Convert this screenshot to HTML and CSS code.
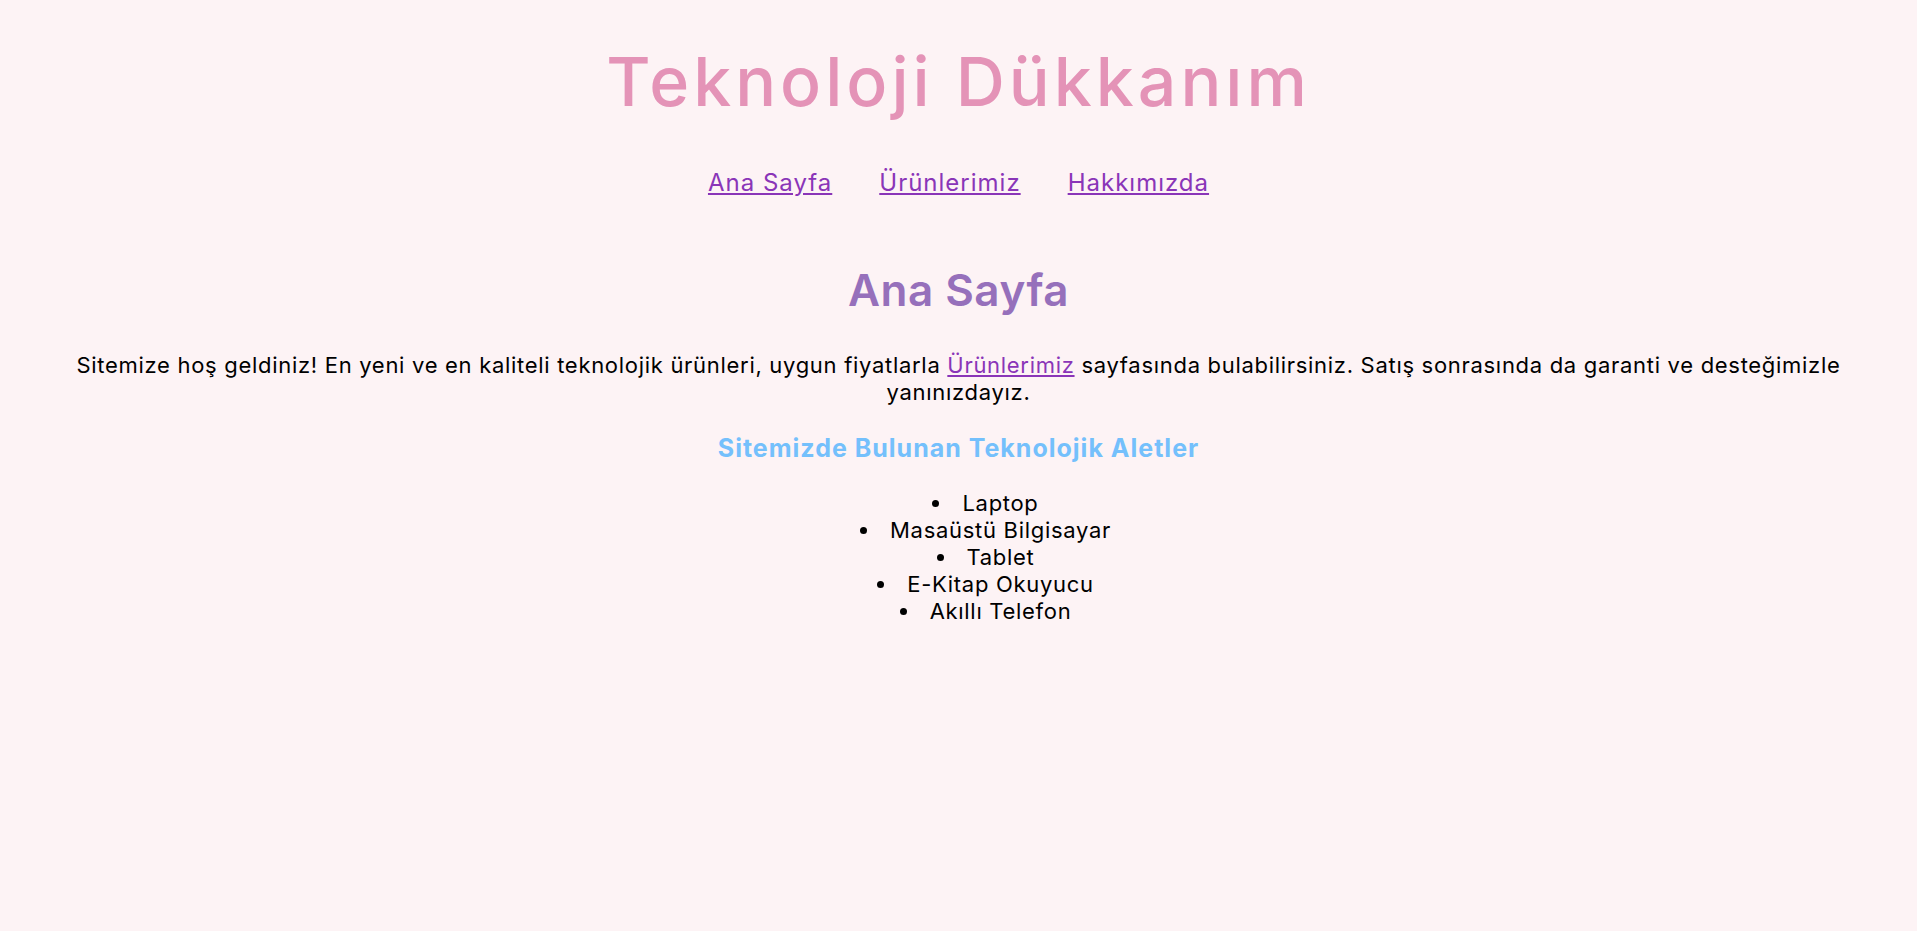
FILE: index.html
```html
<!DOCTYPE html>
<html lang="tr">
<head>
<meta charset="utf-8">
<title>Teknoloji Dükkanım</title>
<link rel="stylesheet" href="styles.css">
</head>
<body>
<header class="site-header">
  <h1 class="site-title">Teknoloji Dükkanım</h1>
  <nav class="main-nav">
    <a href="#" class="nav-link">Ana Sayfa</a>
    <a href="#" class="nav-link">Ürünlerimiz</a>
    <a href="#" class="nav-link">Hakkımızda</a>
  </nav>
</header>
<main class="content">
  <h2 class="page-title">Ana Sayfa</h2>
  <p class="intro"><span>Sitemize hoş geldiniz! En yeni ve en kaliteli teknolojik ürünleri, uygun fiyatlarla</span> <a href="#" class="inline-link">Ürünlerimiz</a> <span>sayfasında bulabilirsiniz. Satış sonrasında da garanti ve desteğimizle</span> <span>yanınızdayız.</span></p>
  <h3 class="section-title">Sitemizde Bulunan Teknolojik Aletler</h3>
  <ul class="device-list">
    <li>Laptop</li>
    <li>Masaüstü Bilgisayar</li>
    <li>Tablet</li>
    <li>E-Kitap Okuyucu</li>
    <li>Akıllı Telefon</li>
  </ul>
</main>
</body>
</html>
```

FILE: styles.css
```css
html, body {
  margin: 0;
  padding: 0;
}
body {
  background: #fdf3f5;
  font-family: Inter, "Noto Sans", sans-serif;
  color: #000;
  text-align: center;
  padding: 0 40px;
  min-height: 931px;
  box-sizing: border-box;
}
.site-header {
  padding-top: 36px;
}
.site-title {
  margin: 0;
  font-size: 68px;
  font-weight: 500;
  line-height: 90px;
  letter-spacing: 4px;
  color: #e493b7;
}
.main-nav {
  display: flex;
  justify-content: center;
  gap: 47px;
  margin-top: 42px;
}
.nav-link {
  font-size: 24px;
  line-height: 30px;
  color: #8a35b8;
  letter-spacing: 1px;
}
.content {
  padding-top: 64px;
}
.page-title {
  margin: 0;
  font-size: 44px;
  font-weight: 600;
  line-height: 56px;
  letter-spacing: 0.5px;
  color: #9670bb;
}
.intro {
  margin: 34px 0 0;
  font-size: 22px;
  line-height: 27px;
  letter-spacing: 0.7px;
}
.inline-link {
  color: #8a35b8;
}
.section-title {
  margin: 27px 0 0;
  font-size: 25px;
  line-height: 30px;
  font-weight: 700;
  letter-spacing: 1px;
  color: #74c0fc;
}
.device-list {
  margin: 27px 0 0;
  padding: 0 0 0 54px;
  list-style-position: inside;
  font-size: 22px;
  line-height: 27px;
  letter-spacing: 0.7px;
}
```
